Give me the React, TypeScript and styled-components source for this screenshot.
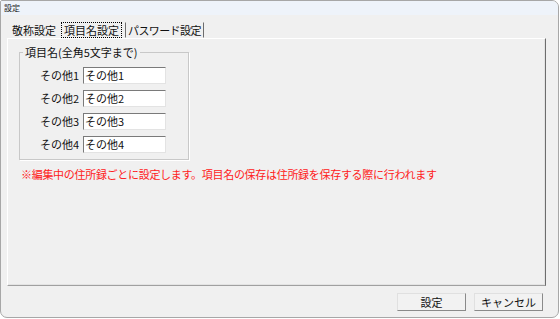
import React from "react";
import styled, { createGlobalStyle } from "styled-components";

const Global = createGlobalStyle`
  html, body { margin: 0; padding: 0; background: #ffffff; }
  body { font-family: "Noto Sans CJK JP", "Noto Sans", sans-serif; }
  * { box-sizing: border-box; }
`;

const Window = styled.div`
  width: 559px;
  height: 318px;
  border: 1px solid #a7a7a7;
  border-radius: 2px 7px 7px 7px;
  background: #f0f0f0;
  display: flex;
  flex-direction: column;
  overflow: hidden;
`;

const TitleBar = styled.div`
  height: 14px;
  flex: none;
  background: #eef3fa;
  font-size: 8px;
  line-height: 14px;
  padding-left: 3px;
  color: #1a1a1a;
`;

const Body = styled.div`
  flex: 1;
  display: flex;
  flex-direction: column;
  padding: 5px 12px 6px 6px;
`;

const TabStrip = styled.div`
  height: 18px;
  flex: none;
  display: flex;
  align-items: flex-end;
  padding-left: 2px;
`;

const Tab = styled.div<{ $active?: boolean; $sep?: boolean; $narrow?: boolean }>`
  height: 16px;
  font-size: 11px;
  line-height: 14px;
  padding: 0 2px;
  margin-right: ${(p) => (p.$active ? "3px" : "2px")};
  letter-spacing: ${(p) => (p.$narrow ? "-0.6px" : "0")};
  color: #111;
  white-space: nowrap;
  border: 1px ${(p) => (p.$active ? "dotted #000" : "solid transparent")};
  border-left: ${(p) => (p.$sep ? "1px solid #6d6d6d" : undefined)};
  border-right: ${(p) => (p.$sep ? "1px solid #6d6d6d" : undefined)};
`;

const Panel = styled.div`
  flex: 1;
  border-top: 1px solid #ffffff;
  border-left: 1px solid #ffffff;
  border-right: 1px solid #6d6d6d;
  border-bottom: 1px solid #a0a0a0;
  box-shadow: inset -1px -1px 0 #e3e3e3;
  padding: 6px 0 0 11px;
  display: flex;
  flex-direction: column;
  align-items: flex-start;
`;

const Group = styled.fieldset`
  width: 170px;
  margin: 0;
  padding: 8px 0 6px 5px;
  border: 1px solid #c8c8c8;
  box-shadow: 1px 1px 0 #ffffff;
  display: grid;
  grid-template-columns: 54px 83px;
  column-gap: 4px;
  row-gap: 6px;
  align-items: center;
`;

const Legend = styled.legend`
  font-size: 11px;
  line-height: 14px;
  padding: 0 2px;
  margin-left: -2px;
  color: #111;
`;

const Label = styled.span`
  font-size: 11px;
  line-height: 17px;
  text-align: right;
  color: #111;
`;

const TextBox = styled.div`
  height: 17px;
  background: #ffffff;
  border-top: 1px solid #7a7a7a;
  border-left: 1px solid #7a7a7a;
  border-right: 1px solid #e3e3e3;
  border-bottom: 1px solid #e3e3e3;
  font-size: 11px;
  line-height: 15px;
  padding-left: 1px;
  color: #111;
`;

const Note = styled.div`
  margin-top: 7px;
  margin-left: 2px;
  font-size: 11px;
  letter-spacing: -0.3px;
  line-height: 14px;
  color: #ff2020;
  white-space: nowrap;
`;

const ButtonRow = styled.div`
  flex: none;
  display: flex;
  justify-content: flex-end;
  gap: 8px;
  margin-top: 7px;
  padding-right: 3px;
`;

const Button = styled.div`
  width: 69px;
  height: 18px;
  background: #f2f2f2;
  border-top: 1px solid #e0e0e0;
  border-left: 1px solid #e0e0e0;
  border-right: 1px solid #8a8a8a;
  border-bottom: 1px solid #8a8a8a;
  font-size: 11px;
  line-height: 16px;
  text-align: center;
  color: #111;
`;

const rows = ["その他1", "その他2", "その他3", "その他4"];

export default function App() {
  return (
    <>
      <Global />
      <Window>
        <TitleBar>設定</TitleBar>
        <Body>
          <TabStrip>
            <Tab>敬称設定</Tab>
            <Tab $active>項目名設定</Tab>
            <Tab $sep $narrow>パスワード設定</Tab>
          </TabStrip>
          <Panel>
            <Group>
              <Legend>項目名(全角5文字まで)</Legend>
              {rows.map((r) => (
                <React.Fragment key={r}>
                  <Label>{r}</Label>
                  <TextBox>{r}</TextBox>
                </React.Fragment>
              ))}
            </Group>
            <Note>
              ※編集中の住所録ごとに設定します。項目名の保存は住所録を保存する際に行われます
            </Note>
          </Panel>
          <ButtonRow>
            <Button>設定</Button>
            <Button>キャンセル</Button>
          </ButtonRow>
        </Body>
      </Window>
    </>
  );
}
